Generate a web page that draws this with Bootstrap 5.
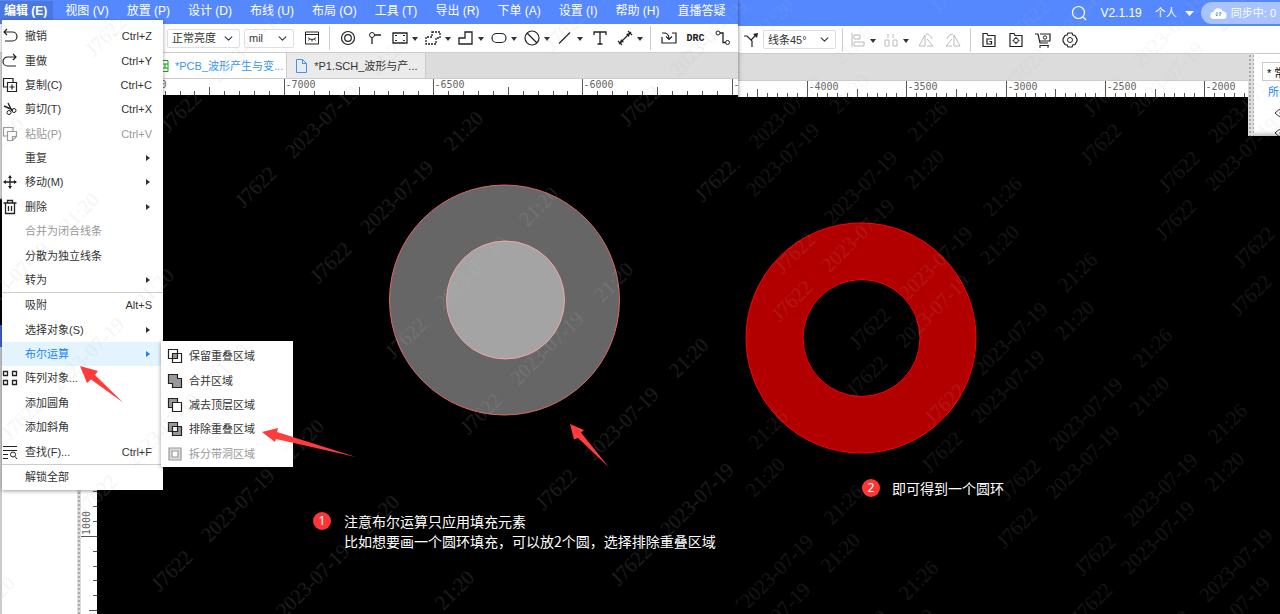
<!DOCTYPE html>
<html lang="zh-CN">
<head>
<meta charset="utf-8">
<meta name="viewport" content="width=device-width, initial-scale=1">
<title>布尔运算</title>
<link href="https://cdn.jsdelivr.net/npm/bootstrap@5.3.0/dist/css/bootstrap.min.css" rel="stylesheet">
<style>
:root{--ui:"Liberation Sans","Noto Sans CJK SC",sans-serif}
body{font:11px/16px var(--ui);color:#333;background:#000}
button{font:inherit;color:inherit;border:0;background:none;padding:0}
svg{display:block;fill:none;stroke:currentColor}
.workspace{display:grid;grid-template-columns:738fr 542fr;min-height:100vh;overflow:hidden}
.pane{position:relative;display:flex;flex-direction:column;min-width:0;overflow:hidden}
.pane-l{box-shadow:0 0 4px #0008;z-index:1;background:#000}
.topbar{background:#58f;color:#fff;font-size:12px;white-space:nowrap;flex:none}
.pane-l .topbar{height:24px;padding:0 4px 3px;gap:18px}
.pane-r .topbar{height:26px}
.topbar .now{font-weight:700;background:#4a78e0;margin-left:-4px;padding:2px 6px 2px 4px;margin-right:-6px}
.tools{background:#fff;height:29px;border-bottom:1px solid #ccc;flex:none;color:#222}
.pane-r .tools{height:28px}
.tool{width:27px;height:24px;display:flex;align-items:center;justify-content:center;flex:none}
.tool.more{width:33px;gap:3px}
.tool.more::after{content:"";border:3px solid transparent;border-top:4px solid #333;border-bottom:0;margin-top:2px}
.tool svg{width:18px;height:18px}
.off svg{color:#bbb}
.rule{width:1px;height:24px;background:#ccc;margin:0 4px;flex:none}
.picker{font:11px/16px var(--ui);height:19px;padding:0 20px 0 4px;border:1px solid #dcdfe6;border-radius:2px;color:#333;background-size:9px 9px;background-position:right 6px center;flex:none}
.tabs{background:#dcdcdc;height:26px;flex:none;border-bottom:1px solid #ccc;white-space:nowrap}
.tab{background:#ebebeb;color:#333;text-decoration:none;display:flex;align-items:center;gap:7px;padding:0 7px 0 9px;border-right:1px solid #ccc}
.tab.on{background:#fff;color:#3a96f5;padding:0 3px 0 160px;gap:6px}
.scale{background:#fff;height:16px;width:100%;flex:none;color:#555}
.scale text,.vscale text{font:10px "DejaVu Sans Mono",monospace;fill:#666;stroke:none}
.vscale{width:16px;background:#fff;color:#555;flex:none}
.dock{width:77px;background:#fff;border-left:2px solid #d0d0d0;flex:none}
.grip{width:4px;background:radial-gradient(circle,#aaa 0 1px,#ddd 1px) 0 0/4px 4px;flex:none}
.canvas{background:#000;position:relative;min-width:0}
.canvas>svg{position:absolute;inset:0;width:100%;height:100%}
.note{position:absolute;display:flex;color:#fff;font:14px/20px "Noto Sans CJK SC",sans-serif;white-space:nowrap}
.num{width:18px;height:18px;border-radius:50%;background:#ff3636;font:12px/18px "Noto Sans",sans-serif;text-align:center;flex:none;margin-top:1px}
.n1{left:216px;top:416px;gap:13px}
.n2{left:124px;top:381px;gap:12px}
.pop{position:absolute;display:flex;flex-direction:column;background:#fff;border-radius:0;border:0;box-shadow:0 1px 4px #0006;font-size:11px;min-width:0;margin:0}
.mainmenu{left:2px;top:20px;width:161px;height:470px;padding:4px 0 1px;z-index:3}
.submenu{left:161px;top:341px;width:132px;height:126px;padding:3px 0 1px;z-index:4}
.pop .dropdown-item{flex:1 1 0;display:flex;align-items:center;gap:6px;padding:0 11px 0 1px;font-size:11px;line-height:16px;color:#333}
.submenu .dropdown-item{padding-left:6px}
.pop .dropdown-item svg,.pop .ico{width:16px;height:16px;flex:none;color:#222}
.mainmenu .dropdown-item{padding-left:0;gap:7px}
.pop .dropdown-item.hot{background:#e3f4ff;color:#1683f5}
.pop .dropdown-item.disabled,.pop .dropdown-item.disabled svg{color:#999}
.pop kbd{margin-left:auto;font:inherit;color:inherit;background:none;padding:0}
.sub::after{content:"";margin:0 2px 0 auto;border:3px solid transparent;border-left:4px solid currentColor;border-right:0}
.cut{height:1px;background:#ccc;flex:none}
.edge{position:absolute;left:0;top:53px;width:2px;height:561px;background:linear-gradient(#ddd 0 145px,#000 147px 272px,#3b63d8 272px 294px,#ccc 294px)}
.veil{position:absolute;inset:0;width:100%;height:100%;pointer-events:none;z-index:5}
.veil text{font:20px "Liberation Serif",serif;fill:#bbb;stroke:none;text-anchor:middle}
.sync{background:#a9c3ff;border-radius:11px 0 0 11px;height:22px;padding:0 0 0 9px;font-size:11px}
.props{width:32px;height:82px;flex:none;background:#fff;overflow:hidden;white-space:nowrap;box-shadow:inset 0 -5px 4px -3px #bbb}
.props .grip{width:6px}
.props .grow{width:26px;overflow:hidden;flex:none;color:#333}
.props input{font:inherit;border:1px solid #ccc;width:60px;height:19px;margin:8px 0 0 8px;padding:0 4px;display:block}
.props a{color:#1683f5;text-decoration:none;display:block;margin:3px 0 0 14px}
.props svg{margin:6px 0 0 20px}
.marks{position:absolute;left:0;top:0;width:100%;height:100%;pointer-events:none;z-index:6}
.marks path{fill:#ff3b3b;stroke:none}
</style>
<script src="https://cdn.jsdelivr.net/npm/bootstrap@5.3.0/dist/js/bootstrap.bundle.min.js"></script>
</head>
<body>
<main class="workspace position-relative">
<section class="pane pane-l">
  <nav class="topbar d-flex align-items-center">
    <button class="now">编辑 (E)</button><button>视图 (V)</button><button>放置 (P)</button><button>设计 (D)</button><button>布线 (U)</button><button>布局 (O)</button><button>工具 (T)</button><button>导出 (R)</button><button>下单 (A)</button><button>设置 (I)</button><button>帮助 (H)</button><button>直播答疑</button>
  </nav>
  <div class="tools d-flex align-items-center">
    <select class="form-select picker" aria-label="亮度" style="width:73px;margin-left:167px"><option>正常亮度</option></select>
    <select class="form-select picker" aria-label="单位" style="width:50px;margin-left:4px"><option>mil</option></select>
    <button class="tool ms-1" aria-label="隐藏"><svg viewBox="0 0 18 18"><path d="M2.500 3h13v12h-13zM2.500 5.500h13M5 8.500c2 2.500 6 2.500 8 0M6.500 10l-1 1.500M9 10.500v2M11.500 10l1 1.500"/></svg></button>
    <span class="rule ms-1 me-1"></span>
    <button class="tool" aria-label="焊盘"><svg viewBox="0 0 18 18"><circle cx="9" cy="9" r="6.500" stroke-width="1.200"/><circle cx="9" cy="9" r="3.300" stroke-width="1.200"/></svg></button>
    <button class="tool" aria-label="过孔"><svg viewBox="0 0 18 18"><circle cx="6" cy="6" r="2.500"/><path d="M6 8.500V15M8.500 6H15" stroke-width="1.300"/></svg></button>
    <button class="tool more" aria-label="矩形"><svg viewBox="0 0 18 18"><path d="M2 4h14v10H2z" stroke-width="1.300"/><path d="M4 6h2v1H4zM12 6h2v1h-2zM4 11h2v1H4zM12 11h2v1h-2z" fill="currentColor" stroke="none"/></svg></button>
    <button class="tool more" aria-label="区域"><svg viewBox="0 0 18 18"><path d="M8 3h8v6h-4v6H2V8h6z" stroke-dasharray="2 1" stroke-width="1.300"/></svg></button>
    <button class="tool more" aria-label="填充"><svg viewBox="0 0 18 18"><path d="M8 3h7v12H2V9h6z" stroke-width="1.300"/></svg></button>
    <button class="tool more" aria-label="椭圆"><svg viewBox="0 0 18 18"><rect x="2" y="4.500" width="14" height="9" rx="4.500" stroke-width="1.200"/></svg></button>
    <button class="tool more" aria-label="禁止区域"><svg viewBox="0 0 18 18"><circle cx="9" cy="9" r="7" stroke-width="1.200"/><path d="M4 4l10 10" stroke-width="1.200"/></svg></button>
    <button class="tool more" aria-label="线条"><svg viewBox="0 0 18 18"><path d="M3 14.500L14 3.500" stroke-width="1.200"/></svg></button>
    <button class="tool" aria-label="文本"><svg viewBox="0 0 18 18"><path d="M3 6V3h12v3M9 3v12M6.500 15h5" stroke-width="1.300"/></svg></button>
    <button class="tool more" aria-label="尺寸"><svg viewBox="0 0 18 18"><path d="M3 15L15 3M2 12l4 4M12 2l4 4" stroke-width="1.200"/><path d="M4 14l1-4 3 3zM14 4l-4 1 3 3z" fill="currentColor" stroke="none"/></svg></button>
    <span class="rule mx-1"></span>
    <button class="tool" aria-label="导入"><svg viewBox="0 0 18 18"><path d="M2 4h4M12 4h4v10H2V8M4 4c4 0 5 2 5 6M6 7.500l3 3 3-3" stroke-width="1.200"/></svg></button>
    <button class="tool" style="font:bold 10px 'Liberation Mono',monospace">DRC</button>
    <button class="tool" aria-label="飞线"><svg viewBox="0 0 18 18"><circle cx="4" cy="4" r="2"/><circle cx="13.500" cy="13.500" r="2"/><path d="M6 4h3v9.500h2.500" stroke-width="1.300"/></svg></button>
  </div>
  <div class="tabs d-flex">
    <a class="tab on" href="#"><svg style="color:#14a014" width="9" height="12" viewBox="0 0 9 12"><path d="M0 .500h8v11H0M0 4h8M0 8h8M5 4v4"/></svg>*PCB_波形产生与变...</a>
    <a class="tab" href="#"><svg width="11" height="14" viewBox="0 0 11 14" style="color:#3a96f5"><path d="M.500.500h6l4 4v9H.500zM6.500.500v4h4"/></svg>*P1.SCH_波形与产...</a>
  </div>
  <svg class="scale" data-first="284" data-step="149.200" data-value="-7000"></svg>
  <div class="d-flex flex-grow-1">
    <aside class="dock"></aside><div class="grip"></div>
    <svg class="vscale"></svg>
    <div class="canvas flex-grow-1">
      <svg><circle cx="407.500" cy="205" r="115" fill="#666" stroke="#d66"/><circle cx="408.500" cy="205" r="59" fill="#a4a4a4" stroke="#f5a3a3"/></svg>
      <div class="note n1"><span class="num">1</span><div>注意布尔运算只应用填充元素<br>比如想要画一个圆环填充，可以放2个圆，选择排除重叠区域</div></div>
    </div>
  </div>
  <i class="edge"></i>
  <div class="pop mainmenu">
    <button class="dropdown-item"><svg viewBox="0 0 16 16"><path d="M5 1L2 4l3 3M2 4h8.500a4 4 0 0 1 0 9H3" stroke-width="1.200"/></svg>撤销<kbd>Ctrl+Z</kbd></button>
    <button class="dropdown-item"><svg viewBox="0 0 16 16"><path d="M11 1l3 3-3 3M14 4H5.500a4 4 0 0 0 0 9H14" stroke-width="1.200"/></svg>重做<kbd>Ctrl+Y</kbd></button>
    <button class="dropdown-item"><svg viewBox="0 0 16 16"><path d="M5 10H1.500V1.500H11V5M5.500 5.500h9v9h-9zM10 7.500v5M7.500 10h5" stroke-width="1.200"/></svg>复制(C)<kbd>Ctrl+C</kbd></button>
    <button class="dropdown-item"><svg viewBox="0 0 16 16"><path d="M6 2l4 8M2 5l9 4" stroke-width="1.400"/><circle cx="7" cy="11.500" r="2"/><circle cx="12" cy="9.500" r="2"/></svg>剪切(T)<kbd>Ctrl+X</kbd></button>
    <button class="dropdown-item disabled"><svg viewBox="0 0 16 16"><path d="M5 10H1.500V1.500H11V5M5.500 5.500h9v5l-4 4h-5zM14.500 10.500h-4v4" stroke-width="1.200"/></svg>粘贴(P)<kbd>Ctrl+V</kbd></button>
    <button class="dropdown-item sub"><span class="ico"></span>重复</button>
    <button class="dropdown-item sub"><svg viewBox="0 0 16 16"><path d="M8 2v12M2 8h12" stroke-width="1.300"/><path d="M8 1l2 3H6zM8 15l2-3H6zM1 8l3-2v4zM15 8l-3-2v4z" fill="currentColor" stroke="none"/></svg>移动(M)</button>
    <button class="dropdown-item sub"><svg viewBox="0 0 16 16"><path d="M1.500 4h13M5.500 4V1.500h5V4M3.500 4v10.500h9V4M6.500 7v5M9.500 7v5" stroke-width="1.300"/></svg>删除</button>
    <button class="dropdown-item disabled"><span class="ico"></span>合并为闭合线条</button>
    <button class="dropdown-item"><span class="ico"></span>分散为独立线条</button>
    <button class="dropdown-item sub"><span class="ico"></span>转为</button>
    <div class="cut"></div>
    <button class="dropdown-item"><span class="ico"></span>吸附<kbd>Alt+S</kbd></button>
    <button class="dropdown-item sub"><span class="ico"></span>选择对象(S)</button>
    <button class="dropdown-item sub hot"><span class="ico"></span>布尔运算</button>
    <button class="dropdown-item"><svg viewBox="0 0 16 16"><path d="M1.500 1.500h4v4h-4zM10.500 1.500h4v4h-4zM1.500 10.500h4v4h-4zM10.500 10.500h4v4h-4z" stroke-width="1.300"/></svg>阵列对象...</button>
    <button class="dropdown-item"><span class="ico"></span>添加圆角</button>
    <button class="dropdown-item"><span class="ico"></span>添加斜角</button>
    <button class="dropdown-item"><svg viewBox="0 0 16 16"><path d="M1 2.500h14M1 6.500h14M1 10.500h5M1 14.500h5" stroke-width="1.200"/><circle cx="11" cy="10.500" r="2.500"/><path d="M13 12.500l2 2.500"/></svg>查找(F)...<kbd>Ctrl+F</kbd></button>
    <div class="cut"></div>
    <button class="dropdown-item"><span class="ico"></span>解锁全部</button>
  </div>
  <div class="pop submenu">
    <button class="dropdown-item"><svg viewBox="0 0 16 16"><path d="M5.500 5.500h5v5h-5z" fill="#999"/><path d="M1.500 1.500h9v9h-9zM5.500 5.500h9v9h-9z" stroke-width="1.200"/></svg>保留重叠区域</button>
    <button class="dropdown-item"><svg viewBox="0 0 16 16"><path d="M1.500 1.500h9v4h4v9h-9v-4h-4z" fill="#999" stroke-width="1.200"/></svg>合并区域</button>
    <button class="dropdown-item"><svg viewBox="0 0 16 16"><path d="M1.500 1.500h9v9h-9z" fill="#999" stroke-width="1.200"/><path d="M5.500 5.500h9v9h-9z" fill="#fff" stroke-width="1.200"/></svg>减去顶层区域</button>
    <button class="dropdown-item"><svg viewBox="0 0 16 16"><path d="M1.500 1.500h9v9h-9zM5.500 5.500h9v9h-9z" fill="#999" stroke-width="1.200"/><path d="M5.500 5.500h5v5h-5z" fill="#fff" stroke-width="1.200"/></svg>排除重叠区域</button>
    <button class="dropdown-item disabled"><svg viewBox="0 0 16 16"><path d="M2 2h12v12H2z" fill="#ddd" stroke-width="1.200"/><path d="M5 5h6v6H5z" fill="#fff" stroke-width="1.200"/></svg>拆分带洞区域</button>
  </div>
  <svg class="veil" opacity=".16"><defs><pattern id="wm1" width="330" height="106.500" patternUnits="userSpaceOnUse" patternTransform="translate(109 110) rotate(-44.800)"><text x="50" y="59">J7622</text><text x="143" y="59">2023-07-19</text><text x="237" y="59">21:20</text></pattern></defs><rect width="100%" height="100%" fill="url(#wm1)" stroke="none"/></svg>
</section>

<section class="pane pane-r">
  <header class="topbar d-flex align-items-center justify-content-end">
    <button aria-label="搜索"><svg width="16" height="16" viewBox="0 0 16 16"><circle cx="7.500" cy="7.500" r="6" stroke-width="1.200"/><path d="M12 12l3 3" stroke-width="1.200"/></svg></button>
    <span style="margin:0 13px 0 13px">V2.1.19</span>
    <button class="d-flex align-items-center" style="gap:8px;font-size:11px">个人<svg width="9" height="5" viewBox="0 0 9 5"><path d="M0 0h9L4.500 5z" fill="#fff" stroke="none"/></svg></button>
    <button class="sync d-flex align-items-center" style="margin-left:7px"><svg width="17" height="13" viewBox="0 0 17 13"><path d="M4 12a3.500 3.500 0 0 1-.500-7A5 5 0 0 1 13 4.500 3.700 3.700 0 0 1 13 12z" fill="#fff" stroke="none"/><path d="M7 5v4M5.500 7.500L7 9M10 9V5M11.500 6.500L10 5" stroke="#58f"/></svg><span class="px-1">同步中: 0</span></button>
  </header>
  <div class="tools d-flex align-items-center">
    <button class="tool" style="width:25px" aria-label="布线模式"><svg viewBox="0 0 18 18"><path d="M2 5h3l5 5v6M9 9l6-6" stroke-width="1.200"/><path d="M16 2l-5 1 4 4z" fill="currentColor" stroke="none"/></svg></button>
    <select class="form-select picker" aria-label="转角" style="width:73px"><option>线条45°</option></select>
    <span class="rule" style="margin:0 3px 0 6px"></span>
    <button class="tool more off" aria-label="对齐"><svg viewBox="0 0 18 18"><path d="M3 2v14M5 4h6v4H5zM5 11h10v4H5z"/></svg></button>
    <button class="tool more off" aria-label="分布"><svg viewBox="0 0 18 18"><path d="M3 9h4v6H3zM11 9h4v6h-4zM6 3v4M11 3v4"/></svg></button>
    <button class="tool off" aria-label="左旋"><svg viewBox="0 0 18 18"><path d="M8 4v11H2zM10 15h6L10 8M9 3c3 0 5 2 6 5"/></svg></button>
    <button class="tool off" aria-label="右旋"><svg viewBox="0 0 18 18"><path d="M10 4v11h6zM8 15H2l6-7M9 3C6 3 4 5 3 8"/></svg></button>
    <span class="rule"></span>
    <button class="tool" aria-label="Gerber"><svg viewBox="0 0 18 18"><path d="M3 15.500v-13h4l1 2h7v11zM12 8H7v5h4.500v-2.500H9.500" stroke-width="1.200"/></svg></button>
    <button class="tool" aria-label="坐标"><svg viewBox="0 0 18 18"><path d="M3 15.500v-13h4l1 2h7v11zM9 6v7M5.500 9.500h7" stroke-width="1.200"/><circle cx="9" cy="9.500" r="2.300" fill="#fff"/></svg></button>
    <button class="tool" aria-label="下单"><svg viewBox="0 0 18 18"><path d="M1 3h3l2 9h8M6 3h10v7H6M6 14.500h9" stroke-width="1.200"/><circle cx="11" cy="6.500" r="1.700"/><path d="M6 14v3M14 14v3"/></svg></button>
    <button class="tool" aria-label="设置"><svg viewBox="0 0 18 18"><circle cx="9" cy="9" r="2.500"/><path d="M7 2h4l.800 2 2.200.500L16 8v2l-2 3.500-2.200.500L11 16H7l-.800-2-2.200-.500L2 10V8l2-3.500L6.200 4z" stroke-width="1.200"/></svg></button>
  </div>
  <div class="d-flex flex-grow-1">
    <div class="d-flex flex-column flex-grow-1">
      <div class="tabs" style="height:27px"></div>
      <svg class="scale" data-first="69" data-step="99.300" data-value="-4000"></svg>
      <div class="canvas flex-grow-1">
        <svg><path fill-rule="evenodd" d="M8 241a115 115 0 1 0 230 0a115 115 0 1 0-230 0M65 241a58.500 58.500 0 1 0 117 0a58.500 58.500 0 1 0-117 0" fill="#b20000" stroke="#f00"/></svg>
        <div class="note n2"><span class="num">2</span><div>即可得到一个圆环</div></div>
      </div>
    </div>
    <aside class="props d-flex"><div class="grip"></div><div class="grow"><input aria-label="筛选" value="* 常用"><a href="#">所有</a><svg width="16" height="14" viewBox="0 0 16 14"><path d="M1 7q7-8 14 0q-7 8-14 0"/><circle cx="8" cy="7" r="2"/></svg><svg width="16" height="14" viewBox="0 0 16 14"><path d="M1 7q7-8 14 0q-7 8-14 0"/><circle cx="8" cy="7" r="2"/></svg></div></aside>
  </div>
  <svg class="veil" opacity=".12"><defs><pattern id="wm2" width="330" height="106.500" patternUnits="userSpaceOnUse" patternTransform="translate(60 327) rotate(-44.800)"><text x="50" y="59">J7622</text><text x="143" y="59">2023-07-19</text><text x="237" y="59">21:26</text></pattern><pattern id="wm3" width="330" height="106.500" patternUnits="userSpaceOnUse" patternTransform="translate(57 375) rotate(-44.800)"><text x="50" y="59">J7622</text><text x="143" y="59">2023-07-19</text><text x="237" y="59">21:20</text></pattern></defs><rect width="100%" height="100%" fill="url(#wm2)" stroke="none"/><rect width="100%" height="100%" fill="url(#wm3)" stroke="none"/></svg>
</section>
<svg class="marks"><path d="M80 366l18 5-3 4 28 27.500L91 379.500 87 383zM262 432l16-4-1 4 79 25-80-18-1 3zM570 424l14 6-3 2.500 28 35L578 438l-4 1.500z"/></svg>
</main>
<script>
// Draws the ruler ticks: ten divisions to each labelled mark, the fifth one longer.
document.querySelectorAll('.scale').forEach(function (s) {
  var first = +s.dataset.first, step = +s.dataset.step, value = +s.dataset.value, out = '';
  var width = s.getBoundingClientRect().width;
  for (var i = -30; i < 80; i++) {
    var x = Math.round(first + i * step / 10) + 0.5, major = i % 10 === 0;
    if (x < 0 || x > width) continue;
    out += '<path d="M' + x + ' 16v-' + (major ? 16 : i % 5 === 0 ? 8 : 4) + '"/>';
    if (major) out += '<text x="' + (x + 1) + '" y="9">' + (x + 30 < width ? value + i * 50 : '-') + '</text>';
  }
  s.innerHTML = out;
});
var v = '';
for (var i = -20; i < 30; i++) {
  var y = Math.round(440.7 + i * 14.92) + 0.5;
  if (y > 0) v += '<path d="M16 ' + y + 'h-' + (i % 10 === 0 ? 16 : i % 5 === 0 ? 8 : 4) + '"/>';
}
document.querySelector('.vscale').innerHTML = v + '<text transform="translate(9 440) rotate(-90)">1000</text>';
</script>
</body>
</html>
